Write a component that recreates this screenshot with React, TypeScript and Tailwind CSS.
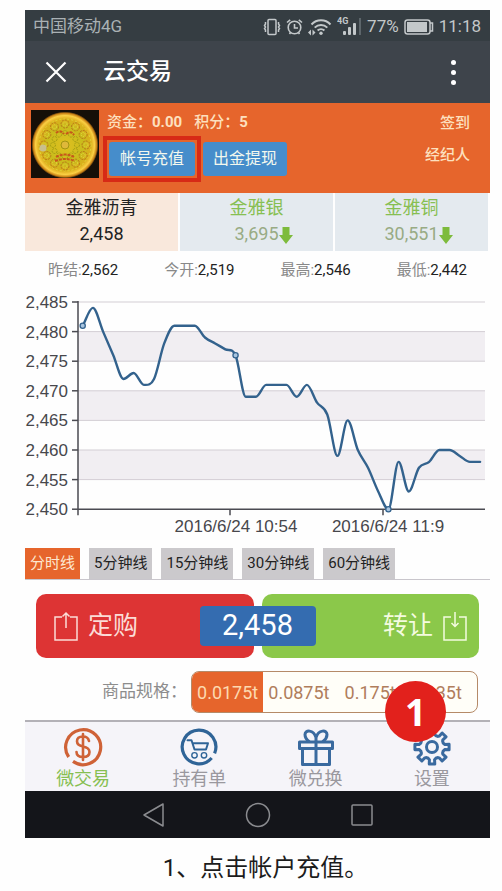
import React, { useState } from 'react';

const prices = [
  2481, 2484, 2480, 2476, 2472, 2473, 2471, 2472, 2478, 2481,
  2481, 2481, 2479, 2478, 2477, 2476, 2469, 2469, 2471, 2471,
  2471, 2469, 2471, 2468, 2466, 2459, 2465, 2460, 2457, 2453,
  2450, 2458, 2453, 2457, 2458, 2460, 2460, 2459, 2458, 2458,
];

const products = [
  { name: '金雅沥青', price: '2,458', down: false },
  { name: '金雅银', price: '3,695', down: true },
  { name: '金雅铜', price: '30,551', down: true },
];

const stats = [
  { label: '昨结', value: '2,562' },
  { label: '今开', value: '2,519' },
  { label: '最高', value: '2,546' },
  { label: '最低', value: '2,442' },
];

const periods = ['分时线', '5分钟线', '15分钟线', '30分钟线', '60分钟线'];
const specs = ['0.0175t', '0.0875t', '0.175t', '0.35t'];

const TOP = 13;
const STEP = 29.6;
const AXIS_X = 53;
const RIGHT = 460;

const toPoint = (value: number, i: number) => ({
  x: 57.7 + i * 10.19,
  y: TOP + ((2485 - value) * STEP) / 5,
});

// Monotone spline: flat at every local peak or dip
function buildPath(values: number[]) {
  const pts = values.map(toPoint);
  const slopes = pts.map((p, i) => {
    if (i === 0) return (pts[1].y - p.y) / (pts[1].x - p.x);
    if (i === pts.length - 1) return 0;
    const a = (p.y - pts[i - 1].y) / (p.x - pts[i - 1].x);
    const b = (pts[i + 1].y - p.y) / (pts[i + 1].x - p.x);
    return a * b <= 0 ? 0 : (a + b) / 2;
  });
  return pts.reduce((d, p, i) => {
    if (i === 0) return `M${p.x},${p.y}`;
    const prev = pts[i - 1];
    const h = (p.x - prev.x) / 3;
    return `${d} C${prev.x + h},${prev.y + slopes[i - 1] * h} ${p.x - h},${p.y - slopes[i] * h} ${p.x},${p.y}`;
  }, '');
}

function StatusBar() {
  return (
    <div className="flex h-[31px] items-center justify-between bg-[#353d42] pl-2 pr-[9px] pt-[2px] text-[17px] text-[#aab1b4]">
      <span>中国移动4G</span>
      <div className="flex items-center gap-[5px] text-[#c3c8ca]">
        <svg width="18" height="18" viewBox="0 0 18 18" fill="none" stroke="currentColor" strokeWidth="1.5">
          <rect x="5" y="1.5" width="8" height="15" rx="1" />
          <path d="M2.5 4v2l-1 1.5 1 1.5-1 1.5 1 1.5v2M15.5 4v2l1 1.5-1 1.5 1 1.5-1 1.5v2" />
        </svg>
        <svg width="17" height="18" viewBox="0 0 17 18" fill="none" stroke="currentColor" strokeWidth="1.6">
          <circle cx="8.5" cy="9.5" r="6.3" />
          <path d="M8.5 6v4h3.5M1 4.5 4.2 1.8M16 4.5l-3.2-2.7M3.5 16l1-1.5M13.5 16l-1-1.5" />
        </svg>
        <svg width="24" height="18" viewBox="0 0 24 18" fill="none" stroke="currentColor" strokeWidth="2">
          <path d="M3.5 6.5a13 13 0 0 1 19 0M6.7 9.6a9 9 0 0 1 12.6 0M9.6 12.5a5 5 0 0 1 6.8 0" />
          <circle cx="13" cy="15.3" r="1.7" fill="currentColor" stroke="none" />
          <path d="M3 11.5v6l-3-3zM4.500 11.500v6l3-3z" fill="currentColor" stroke="none" />
        </svg>
        <svg width="25" height="22" viewBox="0 0 25 22" fill="currentColor">
          <text x="0" y="8" fontSize="9" fontWeight="700">4G</text>
          <rect x="6" y="15" width="3" height="4" rx="1" />
          <rect x="11" y="11" width="3" height="8" rx="1" />
          <rect x="16" y="7" width="3" height="12" rx="1" />
          <rect x="22" y="2" width="2" height="17" fill="#5d666b" />
        </svg>
        <span>77%</span>
        <svg width="30" height="16" viewBox="0 0 30 16" fill="none" stroke="currentColor" strokeWidth="1.5">
          <rect x="1" y="1" width="25" height="14" rx="2.500" />
          <rect x="3" y="3" width="20" height="10" fill="currentColor" stroke="none" />
          <path d="M26 4h2.500v8H26" />
        </svg>
        <span>11:18</span>
      </div>
    </div>
  );
}

function TitleBar() {
  return (
    <header className="flex h-[62px] items-center bg-[#3e444b] pl-5 pr-[30px] text-white">
      <button aria-label="关闭">
        <svg width="22" height="22" viewBox="0 0 22 22" fill="none" stroke="currentColor" strokeWidth="2.2">
          <path d="M1.500 1.500l19 19M20.500 1.500l-19 19" />
        </svg>
      </button>
      <h1 className="ml-9 flex-1 text-[23px] font-medium">云交易</h1>
      <button aria-label="更多" className="flex flex-col gap-[5px] px-1">
        <span className="size-[5px] rounded-full bg-white" />
        <span className="size-[5px] rounded-full bg-white" />
        <span className="size-[5px] rounded-full bg-white" />
      </button>
    </header>
  );
}

function Avatar() {
  const ring = Array.from({ length: 12 }, (_, i) => (i * Math.PI) / 6);
  return (
    <svg width="68" height="68" viewBox="0 0 68 68" className="shrink-0">
      <defs>
        <radialGradient id="gold">
          <stop offset="0" stopColor="#e0c020" />
          <stop offset="0.55" stopColor="#c9bb1c" />
          <stop offset="0.78" stopColor="#dcae1c" />
          <stop offset="0.88" stopColor="#fbd044" />
          <stop offset="0.95" stopColor="#c77f14" />
          <stop offset="1" stopColor="#150f08" />
        </radialGradient>
      </defs>
      <rect width="68" height="68" fill="#150f08" />
      <circle cx="34" cy="35" r="33.500" fill="url(#gold)" />
      <circle cx="34" cy="35" r="26" fill="none" stroke="#e0d83a" strokeDasharray="2 2" />
      {ring.map((a) => (
        <g key={a} fill="none">
          <circle cx={34 + 21 * Math.cos(a)} cy={35 + 21 * Math.sin(a)} r="4" stroke="#b8741a" strokeDasharray="2 1" />
          <circle cx={34 + 21 * Math.cos(a)} cy={35 + 21 * Math.sin(a)} r="2" stroke="#e3dc45" strokeDasharray="1 1" />
          <circle cx={34 + 12 * Math.cos(a)} cy={35 + 12 * Math.sin(a)} r="2.500" stroke="#a39c14" strokeDasharray="2 1" />
        </g>
      ))}
      <path
        d="M25 23q4-4 8 1M35 24q5-4 8 1M25 47q9-5 18 0M24 51q10-4 20 0"
        fill="none"
        stroke="#c8561b"
        strokeWidth="2"
        strokeDasharray="3 1"
      />
      <circle cx="34" cy="35" r="4" fill="#dfb83a" stroke="#a39412" />
      <circle cx="12" cy="38" r="3.500" fill="#c9bf8d" />
    </svg>
  );
}

function Account() {
  return (
    <section className="flex h-[90px] bg-[#e6652c] pl-[6px] pr-5 pt-[7px] text-[15px] leading-5 text-[#fde0bf]">
      <Avatar />
      <div className="ml-1 flex-1">
        <p className="mt-[2px] flex gap-3 pl-1 font-medium">
          <span>资金：<b>0.00</b></span>
          <span>积分：<b>5</b></span>
        </p>
        <div className="mt-1 flex items-center gap-[2px] text-[16px] text-[#f3f8ee]">
          <div className="border-4 border-[#d72a16] p-[2px]">
            <button className="h-[34px] rounded-[3px] bg-[#468dcb] px-[11px]">帐号充值</button>
          </div>
          <button className="h-[34px] rounded-[3px] bg-[#468dcb] px-[10px]">出金提现</button>
        </div>
      </div>
      <div className="mt-[3px] flex flex-col items-end gap-3 font-medium">
        <a href="#sign">签到</a>
        <a href="#agent">经纪人</a>
      </div>
    </section>
  );
}

function Products() {
  return (
    <div className="grid grid-cols-3 gap-[2px] pr-[2px] text-[18px] leading-[26px]">
      {products.map((p) => (
        <button
          key={p.name}
          className={`h-[58px] pb-[2px] ${p.down ? 'bg-[#e4eaef] text-[#87bf52]' : 'bg-[#f9e8dc] text-[#222]'}`}
        >
          <span className="block">{p.name}</span>
          <span className={`relative inline-block ${p.down ? 'text-[#98ab84]' : ''}`}>
            {p.price}
            {p.down && (
              <svg width="14" height="17" viewBox="0 0 14 17" fill="#7dbb3c" className="absolute left-full top-[6px]">
                <path d="M3.500 0h7v8H14L7 17 0 8h3.500z" />
              </svg>
            )}
          </span>
        </button>
      ))}
    </div>
  );
}

function PriceChart() {
  const marked = [0, 15, 30];
  const bottom = TOP + STEP * 7;
  return (
    <svg viewBox="0 0 465 254" className="block w-full font-['Liberation_Sans',sans-serif] text-[17px]">
      {[1, 3, 5].map((n) => (
        <rect key={n} x={AXIS_X} y={TOP + n * STEP} width={RIGHT - AXIS_X} height={STEP} fill="#f1eef2" />
      ))}
      {Array.from({ length: 8 }, (_, n) => (
        <g key={n}>
          {n < 7 && <path d={`M${AXIS_X} ${TOP + n * STEP}H${RIGHT}`} stroke="#d3ced4" />}
          <path d={`M${AXIS_X - 6} ${TOP + n * STEP}h6`} stroke="#4b4b52" strokeWidth="1.5" />
          <text x="43" y={TOP + n * STEP + 6} textAnchor="end" fill="#47474c">
            {(2485 - n * 5).toLocaleString('en-US')}
          </text>
        </g>
      ))}
      <path
        d={`M${AXIS_X} ${TOP - 1}V${bottom + 6}M${AXIS_X} ${bottom}H${RIGHT}M205 ${bottom}v6M358 ${bottom}v6`}
        fill="none"
        stroke="#4b4b52"
        strokeWidth="1.5"
      />
      <path d={buildPath(prices)} fill="none" stroke="#33628d" strokeWidth="2.400" strokeLinecap="round" />
      {marked.map((i) => {
        const p = toPoint(prices[i], i);
        return <circle key={i} cx={p.x} cy={p.y} r="2.600" fill="#a9c5e0" stroke="#33628d" strokeWidth="1.3" />;
      })}
      <text x="211" y="243" textAnchor="middle" fill="#47474c">2016/6/24 10:54</text>
      <text x="363" y="243" textAnchor="middle" fill="#47474c">2016/6/24 11:9</text>
    </svg>
  );
}

function TradeButtons() {
  return (
    <div className="relative mx-[11px] mt-[14px] grid grid-cols-2 gap-2 text-[25px]">
      <button className="flex h-16 items-center gap-[10px] rounded-[10px] bg-[#dd3434] pl-[18px] text-[#fbdcd6]">
        <svg width="24" height="30" viewBox="0 0 24 30" fill="none" stroke="currentColor" strokeWidth="1.500">
          <path d="M8 6H1v23h22V6h-7M12 17V2M8.500 5.500 12 2l3.500 3.500" />
        </svg>
        定购
      </button>
      <button className="flex h-16 items-center justify-end gap-[10px] rounded-[10px] bg-[#8bc84a] pr-3 text-[#f4fbe0]">
        转让
        <svg width="24" height="30" viewBox="0 0 24 30" fill="none" stroke="currentColor" strokeWidth="1.500">
          <path d="M8 6H1v23h22V6h-7M12 1v14M8.500 12 12 15.500 15.500 12" />
        </svg>
      </button>
      <span className="absolute left-1/2 top-3 flex h-10 w-[116px] -translate-x-1/2 items-center justify-center rounded-[4px] bg-[#346cb0] text-[29px] text-white">
        2,458
      </span>
    </div>
  );
}

// Eight-tooth outline centred on 20,20
function gearPath() {
  const at = (r: number, a: number) => `${(20 + r * Math.cos(a)).toFixed(2)} ${(20 + r * Math.sin(a)).toFixed(2)}`;
  let d = '';
  for (let k = 0; k < 8; k++) {
    const a = (k * Math.PI) / 4;
    d += `${k ? 'L' : 'M'}${at(13, a - 0.2)}L${at(17.3, a - 0.16)}L${at(17.3, a + 0.16)}L${at(13, a + 0.2)}`;
    d += `Q${at(10.8, a + Math.PI / 8)} ${at(13, a + Math.PI / 4 - 0.2)}`;
  }
  return `${d}Z`;
}

const iconProps = { width: 40, height: 40, viewBox: '0 0 40 40', fill: 'none', strokeLinecap: 'round', strokeLinejoin: 'round' } as const;

const navItems = [
  {
    label: '微交易',
    icon: (
      <svg {...iconProps} stroke="#cf6237" strokeWidth="3.200">
        <path d="M5.700 30A17.500 17.500 0 1 1 10 34.400" strokeLinecap="butt" />
        <path d="M26 14q-1-4.500-6-4.500-6 0-6 4.800 0 4 6 5.200 6.500 1.300 6.500 5.500 0 5-6.500 5-6.500 0-6.500-5M20 7v26" strokeWidth="2.600" />
      </svg>
    ),
  },
  {
    label: '持有单',
    icon: (
      <svg {...iconProps} stroke="#2f6497" strokeWidth="3.200">
        <path d="M32.700 31A16.800 16.800 0 1 1 35.600 26.300" strokeLinecap="butt" />
        <path d="M8.500 13.200h4l3 9.300H27l2-6.300H13.500" strokeWidth="2" />
        <circle cx="15.500" cy="28.300" r="2.700" strokeWidth="1.400" />
        <circle cx="25" cy="28.300" r="2.700" strokeWidth="1.400" />
      </svg>
    ),
  },
  {
    label: '微兑换',
    icon: (
      <svg {...iconProps} stroke="#3a6a9f" strokeWidth="3">
        <path d="M3.500 15h33v6.500h-33zM6.500 22v15.500h27V22M20 15.500v22" />
        <path d="M13 14.500c-2-1.500-4-4-4-7 0-5 8.500-5 11 3 2.500-8 11-8 11-3 0 3-2 5.500-4 7M20 10.500v4" />
      </svg>
    ),
  },
  {
    label: '设置',
    icon: (
      <svg {...iconProps} stroke="#3a6a9f" strokeWidth="3">
        <path d={gearPath()} />
        <circle cx="20" cy="20" r="5.500" />
      </svg>
    ),
  },
];

export default function App() {
  const [period, setPeriod] = useState('分时线');
  const [spec, setSpec] = useState('0.0175t');
  const [tab, setTab] = useState('微交易');

  return (
    <div className="min-h-screen bg-[#fefefe] pb-2 pl-[25px] pr-3 pt-[10px] font-['Roboto','Noto_Sans_CJK_SC',sans-serif]">
      <StatusBar />
      <TitleBar />
      <Account />
      <Products />

      <dl className="grid h-[38px] grid-cols-4 items-center text-[15px]">
        {stats.map((s) => (
          <div key={s.label} className="flex justify-center">
            <dt className="text-[#888]">{s.label}:</dt>
            <dd className="text-[#222]">{s.value}</dd>
          </div>
        ))}
      </dl>

      <PriceChart />

      <div className="mt-[5px] flex gap-[9px] border-b border-[#c9c6cc] text-[15px]">
        {periods.map((p) => (
          <button
            key={p}
            onClick={() => setPeriod(p)}
            className={`h-[31px] px-[5px] ${p === period ? 'bg-[#e6652c] text-[#fde8d0]' : 'bg-[#cbc9cc] text-[#222]'}`}
          >
            {p}
          </button>
        ))}
      </div>

      <TradeButtons />

      {/* Lot size */}
      <div className="relative mr-3 mt-[13px] flex items-center justify-end">
        <span className="mr-1 text-[17px] text-[#8d8d8d]">商品规格：</span>
        <div
          role="radiogroup"
          aria-label="商品规格"
          className="grid h-[42px] w-[287px] grid-cols-4 overflow-hidden rounded-[8px] border border-[#b58a68] bg-[#fffef8] text-[18px]"
        >
          {specs.map((s) => (
            <label
              key={s}
              className={`relative flex items-center justify-center ${s === spec ? 'bg-[#e6652c] text-[#fdd9b0]' : 'text-[#b07d5c]'}`}
            >
              <input type="radio" name="spec" className="sr-only" checked={s === spec} onChange={() => setSpec(s)} />
              {s}
            </label>
          ))}
        </div>
        <span className="absolute right-8 top-[10px] z-10 flex size-[61px] items-center justify-center rounded-full bg-[#e2211c] font-['Noto_Sans',sans-serif] text-[37px] font-bold text-white">
          1
        </span>
      </div>

      <nav className="mt-[7px] grid h-[71px] grid-cols-4 border-t-2 border-[#b3b1b7] bg-[#f5f4f9] text-[18px] leading-5">
        {navItems.map((n) => (
          <button
            key={n.label}
            onClick={() => setTab(n.label)}
            className={`flex flex-col items-center gap-[2px] pt-[5px] ${n.label === tab ? 'text-[#87bf52]' : 'text-[#9a989e]'}`}
          >
            {n.icon}
            {n.label}
          </button>
        ))}
      </nav>

      {/* System keys */}
      <div className="flex h-[47px] items-center justify-center gap-[79px] bg-[#14151a] text-[#8b8c90]">
        <button aria-label="返回">
          <svg width="24" height="26" viewBox="0 0 24 26" fill="none" stroke="currentColor" strokeWidth="1.500" strokeLinejoin="round">
            <path d="M21 2v22L2 13z" />
          </svg>
        </button>
        <button aria-label="主页">
          <svg width="26" height="26" viewBox="0 0 26 26" fill="none" stroke="currentColor" strokeWidth="1.500">
            <circle cx="13" cy="13" r="11.500" />
          </svg>
        </button>
        <button aria-label="最近">
          <svg width="24" height="24" viewBox="0 0 24 24" fill="none" stroke="currentColor" strokeWidth="1.500">
            <rect x="2" y="2" width="20" height="20" rx="1" />
          </svg>
        </button>
      </div>

      <p className="mt-3 pl-4 text-center text-[24px] text-[#1c1c1c]">1、点击帐户充值。</p>
    </div>
  );
}
